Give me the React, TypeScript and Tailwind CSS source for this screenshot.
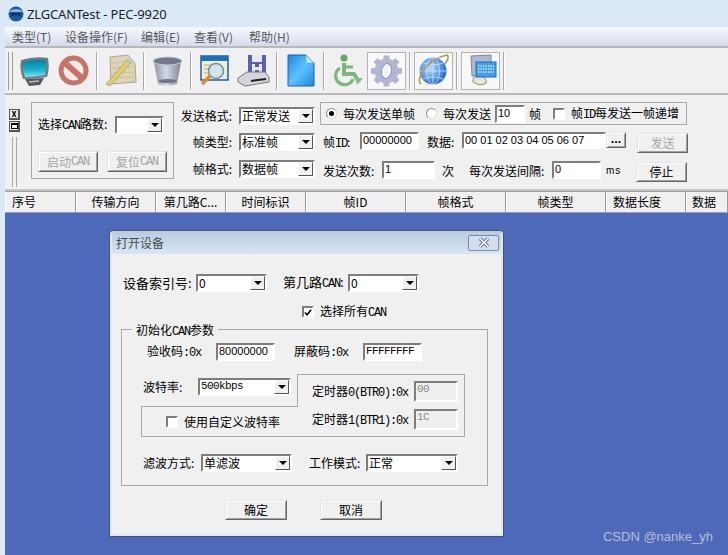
import React from 'react';

const M = ({ children }: { children: React.ReactNode }) => (
  <span className="font-['Liberation_Mono',monospace] text-[12px] tracking-[-1.2px]">{children}</span>
);

const sunken = 'border-2 border-t-[#7d7d7d] border-l-[#7d7d7d] border-b-white border-r-white';

const Field = ({ w, h = 'h-[18px]', value, dim, mono }: { w: string; h?: string; value?: string; dim?: boolean; mono?: boolean }) => (
  <div className={`${w} ${h} ${sunken} ${dim ? 'bg-[#efefef] text-[#8a8a8a]' : 'bg-white text-black'} ${mono ? "font-['Liberation_Mono',monospace] text-[11px] tracking-[-0.6px]" : "font-['Liberation_Sans',sans-serif] text-[11px]"} shrink-0 px-px leading-[13px]`}>
    {value}
  </div>
);

const Combo = ({ w, value, mono }: { w: string; value?: string; mono?: boolean }) => (
  <div className={`${w} h-[18px] ${sunken} bg-white shrink-0 flex items-stretch justify-between`}>
    <span className={`pl-px leading-[13px] whitespace-nowrap ${mono ? "font-['Liberation_Mono',monospace] text-[11px] tracking-[-0.6px]" : 'text-[12px]'}`}>{value}</span>
    <span className="w-[15px] bg-[#f0f0f0] border border-t-white border-l-white border-r-[#555555] border-b-[#555555] flex items-center justify-center">
      <span className="w-0 h-0 border-x-[4px] border-x-transparent border-t-[4px] border-t-black" />
    </span>
  </div>
);

const Btn = ({ w, h = 'h-[20px]', children, dim }: { w: string; h?: string; children: React.ReactNode; dim?: boolean }) => (
  <div className={`${w} ${h} shrink-0 bg-[#f0f0f0] border border-t-[#e4e4e4] border-l-[#e4e4e4] border-r-[#666666] border-b-[#666666] shadow-[inset_1px_1px_0_#fff,inset_-1px_-1px_0_#a0a0a0] flex items-center justify-center text-[12px] ${dim ? 'text-[#a6a6a6]' : 'text-black'}`}>
    {children}
  </div>
);

const Check = ({ on }: { on?: boolean }) => (
  <span className={`w-[12px] h-[12px] shrink-0 ${sunken} bg-white flex items-center justify-center`}>
    {on && (
      <svg width="9" height="9" viewBox="0 0 9 9">
        <path d="M1 4.5 L3.5 7 L8 1.5" fill="none" stroke="#000" strokeWidth="1.8" />
      </svg>
    )}
  </span>
);

const Radio = ({ on }: { on?: boolean }) => (
  <span className="w-[11px] h-[11px] shrink-0 rounded-full bg-white border border-t-[#8a8a8a] border-l-[#8a8a8a] border-r-[#dddddd] border-b-[#dddddd] flex items-center justify-center">
    {on && <span className="w-[5px] h-[5px] rounded-full bg-black" />}
  </span>
);

const ToolBtn = ({ children, boxed }: { children: React.ReactNode; boxed?: boolean }) => (
  <div className={`w-[39px] h-[38px] flex items-center justify-center shrink-0 ${boxed ? "border border-[#b4b4b4] bg-[#f8f8f8]" : ''}`}>
    {children}
  </div>
);

const ToolSep = ({ w = 'w-[8px]' }: { w?: string }) => (
  <div className={`${w} h-[38px] flex justify-center shrink-0`}>
    <div className="w-[2px] h-full bg-[#a9a9a9] border-r border-white" />
  </div>
);

const MonitorIcon = () => (
  <svg width="33" height="32" viewBox="0 0 33 32">
    <defs>
      <linearGradient id="scr" x1="0" y1="0" x2="0" y2="1">
        <stop offset="0" stopColor="#0d7f9e" />
        <stop offset="0.6" stopColor="#17b2cf" />
        <stop offset="1" stopColor="#7fe6f4" />
      </linearGradient>
    </defs>
    <path d="M3 5 Q16 1 30 3 Q32 14 29 22 Q16 24 5 24 Q1 14 3 5Z" fill="#777a80" />
    <path d="M5 7 Q16 4 28 5 Q29 13 27 20 Q16 22 7 22 Q4 14 5 7Z" fill="url(#scr)" />
    <path d="M7 24 L26 23 L22 30 L11 31Z" fill="#55585e" />
    <path d="M11 27 L21 26" stroke="#b9bcc2" strokeWidth="1.5" />
  </svg>
);

const StopIcon = () => (
  <svg width="31" height="31" viewBox="0 0 31 31">
    <circle cx="15.5" cy="15.5" r="12.5" fill="#f5ebe8" stroke="#c8736a" strokeWidth="5" />
    <path d="M7 8 L24 23" stroke="#c8736a" strokeWidth="6" />
  </svg>
);

const NoteIcon = () => (
  <svg width="33" height="33" viewBox="0 0 33 33">
    <path d="M6 3 L24 1 L31 9 L32 28 L7 30Z" fill="#ddd4b4" stroke="#a9a494" />
    <path d="M8 9 L24 8 M8 14 L29 13 M9 19 L30 18 M9 24 L30 23" stroke="#c9c2a2" />
    <path d="M24 1 L25 9 L31 9Z" fill="#c6c9d8" />
    <path d="M2 30 L23 6 L27 9 L6 32Z" fill="#dccd76" stroke="#a49c5c" strokeWidth="0.7" />
  </svg>
);

const BinIcon = () => (
  <svg width="33" height="32" viewBox="0 0 33 32">
    <defs>
      <linearGradient id="bin" x1="0" y1="0" x2="1" y2="0">
        <stop offset="0" stopColor="#8d94a8" />
        <stop offset="0.45" stopColor="#d4d8e4" />
        <stop offset="1" stopColor="#7f8698" />
      </linearGradient>
    </defs>
    <path d="M3 7 L7 29 Q16 32 26 29 L30 7Z" fill="url(#bin)" />
    <ellipse cx="16.5" cy="6" rx="14.5" ry="4" fill="#72798c" stroke="#c8ccd8" />
    <ellipse cx="16.5" cy="26" rx="9" ry="2" fill="#6f7588" />
  </svg>
);

const FindIcon = () => (
  <svg width="31" height="32" viewBox="0 0 31 32">
    <rect x="2" y="1" width="27" height="24" fill="#f2edd6" stroke="#1e5fa8" strokeWidth="1.5" />
    <rect x="2" y="1" width="27" height="5" fill="#1e6fc0" />
    <path d="M5 10 H14 M5 14 H10 M5 18 H10" stroke="#b5a97a" />
    <circle cx="17" cy="16" r="7.5" fill="#cfe6ee" stroke="#7a8f98" strokeWidth="1.6" />
    <path d="M11 21 L3 29" stroke="#e58a22" strokeWidth="3.5" />
  </svg>
);

const DiskIcon = () => (
  <svg width="33" height="33" viewBox="0 0 33 33">
    <path d="M11 1 H29 V20 H11Z" fill="#5d5fa8" />
    <rect x="15" y="1" width="10" height="7" fill="#e8e8f5" />
    <path d="M15 10 h3 v3 h4 v-3 h3 v9 h-3 v-3 h-4 v3 h-3Z" fill="#e8e8f5" />
    <path d="M1 24 L10 18 H28 L32 23 V28 L8 32 L1 28Z" fill="#d4d5d8" stroke="#77797e" />
    <path d="M14 27 L29 25" stroke="#202020" strokeWidth="2" />
  </svg>
);

const DocIcon = () => (
  <svg width="28" height="33" viewBox="0 0 28 33">
    <defs>
      <linearGradient id="doc" x1="0" y1="0" x2="1" y2="1">
        <stop offset="0" stopColor="#1c84df" />
        <stop offset="0.5" stopColor="#5cc2ff" />
        <stop offset="1" stopColor="#2086dc" />
      </linearGradient>
    </defs>
    <path d="M1 1 H19 L27 9 V32 H1Z" fill="url(#doc)" stroke="#1667ae" />
    <path d="M19 1 L19 9 L27 9Z" fill="#bfeef2" stroke="#4aa4c4" strokeWidth="0.6" />
  </svg>
);

const WheelIcon = () => (
  <svg width="32" height="33" viewBox="0 0 32 33">
    <circle cx="12" cy="4" r="3.5" fill="#69a569" />
    <path d="M12 9 V20 H22 L27 28" fill="none" stroke="#7db77b" strokeWidth="4" />
    <path d="M8 14 A9 9 0 1 0 21 25" fill="none" stroke="#7db77b" strokeWidth="3.2" />
    <path d="M12 13 H21" stroke="#7db77b" strokeWidth="3" />
    <path d="M24 24 L31 24 L25 31Z" fill="#8ab888" />
  </svg>
);

const GearIcon = () => (
  <svg width="31" height="32" viewBox="0 0 31 32">
    <g fill="#b2b6d4">
      <ellipse cx="15.5" cy="16" rx="12" ry="12.5" />
      {[0, 45, 90, 135, 180, 225, 270, 315].map((a) => (
        <rect key={a} x="12.5" y="0.5" width="6" height="6" rx="1" transform={`rotate(${a} 15.5 16)`} />
      ))}
    </g>
    <ellipse cx="15.5" cy="16" rx="5" ry="7.5" fill="#f4f4f4" stroke="#8f93b2" transform="rotate(12 15.5 16)" />
  </svg>
);

const GlobeIcon = () => (
  <svg width="33" height="33" viewBox="0 0 33 33">
    <defs>
      <radialGradient id="ie" cx="0.4" cy="0.4" r="0.7">
        <stop offset="0" stopColor="#b9dcfa" />
        <stop offset="0.6" stopColor="#4f94e6" />
        <stop offset="1" stopColor="#1d55b4" />
      </radialGradient>
    </defs>
    <circle cx="16" cy="17" r="13.5" fill="url(#ie)" />
    <path d="M3 17 H29 M16 4 V30 M6 9 Q16 13 26 9 M6 25 Q16 21 26 25" stroke="#cfe5fb" strokeWidth="0.8" fill="none" />
    <ellipse cx="16" cy="17" rx="6.5" ry="13.5" fill="none" stroke="#cfe5fb" strokeWidth="0.8" />
    <path d="M4 30 Q0 27 6 17 Q15 4 30 1 Q33 3 28 10" fill="none" stroke="#b89a4c" strokeWidth="1.6" />
  </svg>
);

const KbIcon = () => (
  <svg width="33" height="33" viewBox="0 0 33 33">
    <path d="M7 2 L27 1 V20 L8 22Z" fill="#aeb9cc" stroke="#7d8799" />
    <path d="M9 28 Q8 22 15 21 Q24 24 22 29 Q16 33 9 28Z" fill="#e9e7dd" stroke="#8b8b80" />
    <rect x="12" y="8" width="20" height="15" fill="#3f9ff0" stroke="#1b6fc2" />
    <path d="M14 12 H30 M14 15 H30 M14 18 H30" stroke="#cfe8fd" strokeWidth="1.4" strokeDasharray="1.5 1" />
  </svg>
);

const headers = [
  { label: '序号', cls: 'w-[71px] pl-[7px]' },
  { label: '传输方向', cls: 'w-[80px] justify-center' },
  { label: '第几路C...', cls: 'w-[70px] justify-center' },
  { label: '时间标识', cls: 'w-[80px] justify-center' },
  { label: '帧ID', cls: 'w-[100px] justify-center' },
  { label: '帧格式', cls: 'w-[100px] justify-center' },
  { label: '帧类型', cls: 'w-[100px] justify-center' },
  { label: '数据长度', cls: 'w-[80px] pl-[7px]' },
  { label: '数据', cls: 'w-[42px] pl-[6px]' },
];

const menus = [
  { label: '类型(T)', cls: 'w-[53px]' },
  { label: '设备操作(F)', cls: 'w-[76px]' },
  { label: '编辑(E)', cls: 'w-[53px]' },
  { label: '查看(V)', cls: 'w-[55px]' },
  { label: '帮助(H)', cls: 'w-[60px]' },
];

export default function App() {
  return (
    <div className="relative w-[728px] h-[555px] overflow-hidden bg-[#dce9f5] text-[12px] text-black font-['Noto_Sans_CJK_SC','Noto_Sans',sans-serif] leading-[14px]">
      {/* title bar */}
      <div className="h-[27px] flex items-center pl-[8px] bg-[#dbe8f5]">
        <svg width="16" height="16" viewBox="0 0 16 16">
          <circle cx="8" cy="8" r="7.5" fill="#1c5c9e" />
          <path d="M1 5 Q8 1 15 5 V6 H1Z" fill="#7fb4de" />
          <rect x="3" y="7" width="10" height="2.5" fill="#0b2f5c" />
        </svg>
        <span className="ml-[3px] text-[13px] tracking-[-0.15px] text-[#1e1e1e] font-['Noto_Sans',sans-serif]">ZLGCANTest - PEC-9920</span>
      </div>

      <div className="ml-[5px] h-[528px] flex flex-col">
        {/* menu */}
        <div className="h-[19px] shrink-0 flex items-center pl-[7px] text-[#57585a] bg-gradient-to-b from-[#f7f9fd] to-[#d3dbec] whitespace-nowrap">
          {menus.map((m) => (
            <span key={m.label} className={m.cls}>{m.label}</span>
          ))}
        </div>

        {/* toolbar */}
        <div className="h-[49px] shrink-0 flex items-center bg-[#f0f0f0] border-y-2 border-y-[#b9b9b9]">
          <div className="w-[5px] h-[38px] ml-[3px] mr-[2px] border-x border-[#9c9c9c]" />
          <ToolBtn><MonitorIcon /></ToolBtn>
          <ToolBtn><StopIcon /></ToolBtn>
          <ToolSep />
          <ToolBtn><NoteIcon /></ToolBtn>
          <ToolSep />
          <ToolBtn><BinIcon /></ToolBtn>
          <ToolSep />
          <ToolBtn><FindIcon /></ToolBtn>
          <ToolBtn><DiskIcon /></ToolBtn>
          <ToolSep />
          <ToolBtn><DocIcon /></ToolBtn>
          <ToolSep />
          <ToolBtn><WheelIcon /></ToolBtn>
          <ToolBtn boxed><GearIcon /></ToolBtn>
          <ToolSep />
          <ToolBtn boxed><GlobeIcon /></ToolBtn>
          <ToolSep />
          <ToolBtn boxed><KbIcon /></ToolBtn>
          <ToolSep />
        </div>

        {/* control bar */}
        <div className="h-[96px] shrink-0 bg-[#f0f0f0] flex border-b-2 border-b-[#c4c4c4]">
          <div className="w-[26px] shrink-0 pt-[14px] pl-[4px] flex flex-col">
            <span className="w-[11px] h-[11px] bg-[#f0f0f0] border border-[#555555] border-r-2 border-b-2 text-[9px] leading-[8px] text-center font-bold">x</span>
            <span className="mt-px w-[11px] h-[11px] bg-[#f0f0f0] border border-[#555555] border-r-2 border-b-2 flex items-center justify-center">
              <span className="w-[7px] h-[6px] border border-black border-t-2" />
            </span>
            <span className="mt-[5px] ml-[3px] w-[5px] h-[50px] border-x border-[#a8a8a8]" />
          </div>

          <div className="w-[143px] h-[77px] mt-[7px] shrink-0 border border-[#a8a8a8] pl-[6px] pt-[13px]">
            <div className="flex items-center h-[18px]">
              <span className="w-[77px] whitespace-nowrap">选择<M>CAN</M>路数:</span>
              <Combo w="w-[49px]" />
            </div>
            <div className="flex mt-[17px] gap-[9px]">
              <Btn w="w-[60px]" h="h-[21px]" dim>启动<M>CAN</M></Btn>
              <Btn w="w-[60px]" h="h-[21px]" dim>复位<M>CAN</M></Btn>
            </div>
          </div>

          <div className="w-[145px] shrink-0 mt-[12px] pl-[2px] pr-[4px] flex flex-col gap-[8px] whitespace-nowrap">
            <div className="flex items-center justify-end h-[18px] gap-[7px]"><span>发送格式:</span><Combo w="w-[76px]" value="正常发送" /></div>
            <div className="flex items-center justify-end h-[18px] gap-[7px]"><span>帧类型:</span><Combo w="w-[76px]" value="标准帧" /></div>
            <div className="flex items-center justify-end h-[18px] gap-[7px] mt-px"><span>帧格式:</span><Combo w="w-[76px]" value="数据帧" /></div>
          </div>

          <div className="w-[400px] shrink-0 ml-px pt-[7px]">
            <div className="w-[367px] h-[23px] border border-[#a8a8a8] flex items-center pl-[5px] whitespace-nowrap">
              <Radio on />
              <span className="ml-[6px] w-[72px]">每次发送单帧</span>
              <span className="ml-[11px]"><Radio /></span>
              <span className="ml-[6px] w-[48px]">每次发送</span>
              <span className="ml-[4px]"><Field w="w-[30px]" value="10" /></span>
              <span className="ml-[4px] w-[12px]">帧</span>
              <span className="ml-[12px]"><Check /></span>
              <span className="ml-[6px]">帧<M>ID</M>每发送一帧递增</span>
            </div>
            <div className="flex items-start mt-[7px] pl-[3px] whitespace-nowrap">
              <span className="w-[37px] mt-[3px]">帧<M>ID</M>:</span>
              <Field w="w-[59px]" value="00000000" />
              <span className="ml-[8px] w-[35px] mt-[3px]">数据:</span>
              <Field w="w-[144px]" h="h-[17px]" value="00 01 02 03 04 05 06 07" />
              <Btn w="w-[20px]" h="h-[16px]"><span className="font-bold text-[11px] leading-none pb-[3px]">...</span></Btn>
              <span className="ml-[11px] mt-px"><Btn w="w-[51px]" dim>发送</Btn></span>
            </div>
            <div className="flex items-start mt-[8px] pl-[3px] whitespace-nowrap">
              <span className="w-[59px] mt-[3px]">发送次数:</span>
              <Field w="w-[53px]" value="1" />
              <span className="ml-[7px] w-[27px] mt-[3px]">次</span>
              <span className="w-[83px] mt-[3px]">每次发送间隔:</span>
              <Field w="w-[49px]" value="0" />
              <span className="ml-[5px] w-[30px] mt-[3px] text-[10px] tracking-[1px] font-['Liberation_Sans',sans-serif]">ms</span>
              <span className="mt-px"><Btn w="w-[51px]">停止</Btn></span>
            </div>
          </div>
        </div>

        {/* table header */}
        <div className="h-[22px] shrink-0 flex bg-[#f0f0f0] border-y border-y-[#a0a0a0] whitespace-nowrap">
          {headers.map((h) => (
            <div key={h.label} className={`${h.cls} shrink-0 flex items-center border-r border-[#9a9a9a] shadow-[inset_1px_0_0_#fff]`}>
              {h.label}
            </div>
          ))}
        </div>

        <div className="flex-1 bg-[#4e69b9]" />
      </div>

      {/* open device dialog */}
      <div className="absolute left-[109px] top-[230px] w-[395px] h-[307px] flex flex-col rounded-t-[4px] border border-[#4a5268] bg-[#dbe8f5] px-[2px] pb-[2px]">
        <div className="h-[23px] shrink-0 flex items-center justify-between pl-[4px] pr-[2px] text-[#4a4a4a] bg-gradient-to-b from-[#b9cbe0] to-[#d8e6f4]">
          <span>打开设备</span>
          <div className="w-[31px] h-[16px] rounded-[2px] border border-[#7d8ba0] bg-[#d3dfec] flex items-center justify-center">
            <svg width="14" height="11" viewBox="0 0 14 11">
              <path d="M3 1.5 L11 9.5 M11 1.5 L3 9.5" stroke="#6b7686" strokeWidth="3.4" />
              <path d="M3 1.5 L11 9.5 M11 1.5 L3 9.5" stroke="#f4f6f9" strokeWidth="1.5" />
            </svg>
          </div>
        </div>

        <div className="flex-1 bg-[#f0f0f0] pl-[9px] pt-[20px]">
          <div className="flex items-center h-[18px] whitespace-nowrap">
            <span className="w-[73px] ml-[2px] text-[13px]">设备索引号:</span>
            <Combo w="w-[71px]" value="0" />
            <span className="ml-[16px] w-[65px] text-[13px]">第几路<M>CAN</M>:</span>
            <Combo w="w-[71px]" value="0" />
          </div>
          <div className="flex items-center ml-[181px] mt-[12px]">
            <Check on />
            <span className="ml-[6px]">选择所有<M>CAN</M></span>
          </div>

          <div className="relative mt-[9px] w-[367px] h-[157px] border border-[#a8a8a8] pl-[19px]">
            <span className="absolute left-[10px] top-[-7px] px-[4px] bg-[#f0f0f0]">初始化<M>CAN</M>参数</span>
            <div className="flex items-center h-[18px] mt-[13px] ml-[6px] whitespace-nowrap">
              <span className="w-[69px]">验收码<M>:0x</M></span>
              <Field w="w-[59px]" value="80000000" />
              <span className="ml-[19px] w-[69px]">屏蔽码<M>:0x</M></span>
              <Field w="w-[59px]" value="FFFFFFFF" mono />
            </div>

            <div className="grid grid-cols-[156px_168px] grid-rows-[33px_30px] mt-[13px]">
              <div className="flex items-start pt-[4px] pl-[2px] border-b border-[#a8a8a8]">
                <span className="w-[55px] mt-[2px]">波特率:</span>
                <Combo w="w-[93px]" value="500kbps" mono />
              </div>
              <div className="flex items-start pt-[6px] pl-[14px] border-t border-x border-[#a8a8a8] whitespace-nowrap">
                <span className="w-[102px] mt-[3px]">定时器<M>0(BTR0):0x</M></span>
                <Field w="w-[44px]" h="h-[21px]" value="00" dim mono />
              </div>
              <div className="flex items-center pl-[24px] border-l border-b border-[#a8a8a8]">
                <Check />
                <span className="ml-[6px]">使用自定义波特率</span>
              </div>
              <div className="flex items-start pt-[2px] pl-[15px] border-r border-b border-[#a8a8a8] whitespace-nowrap">
                <span className="w-[102px] mt-[3px]">定时器<M>1(BTR1):0x</M></span>
                <Field w="w-[44px]" h="h-[21px]" value="1C" dim mono />
              </div>
            </div>

            <div className="flex items-center mt-[17px] ml-[2px] whitespace-nowrap">
              <span className="w-[58px]">滤波方式:</span>
              <Combo w="w-[91px]" value="单滤波" />
              <span className="ml-[17px] w-[57px]">工作模式:</span>
              <Combo w="w-[92px]" value="正常" />
            </div>
          </div>

          <div className="flex mt-[14px] ml-[104px] gap-[33px]">
            <Btn w="w-[62px]">确定</Btn>
            <Btn w="w-[62px]">取消</Btn>
          </div>
        </div>
      </div>

      <span className="absolute right-[15px] bottom-[11px] text-[13px] text-[#b5bfdc] font-['Liberation_Sans',sans-serif]">CSDN @nanke_yh</span>
    </div>
  );
}
